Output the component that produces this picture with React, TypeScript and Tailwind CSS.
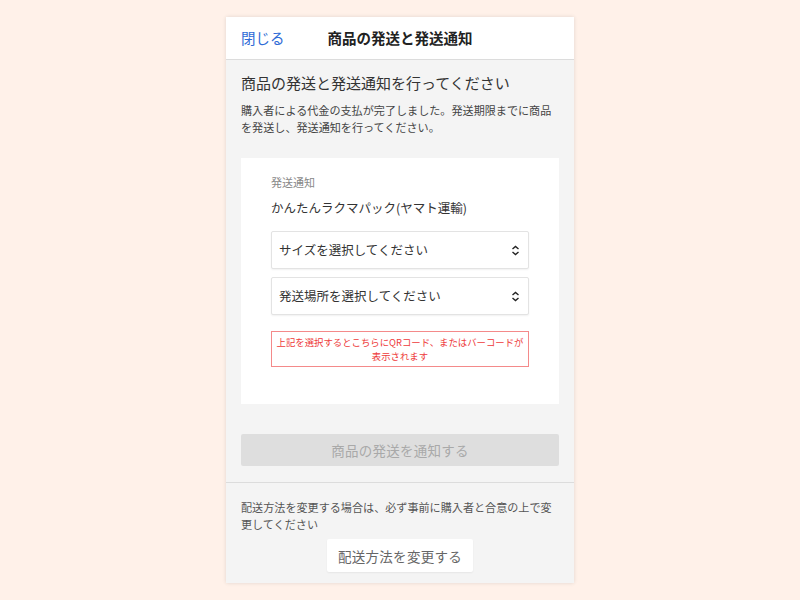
import React from "react";

const font = { fontFamily: '"Noto Sans CJK JP", "Noto Sans", sans-serif' };

function SelectBox({ label }: { label: string }) {
  return (
    <div className="flex h-[38px] items-center justify-between rounded-[2px] border border-[#e3e3e3] bg-white pl-[7px] pr-[8px] shadow-[0_1px_2px_rgba(0,0,0,0.06)]">
      <span className="text-[12.5px] text-[#333]">{label}</span>
      <svg width="9" height="11" viewBox="0 0 9 11" fill="none">
        <path d="M1.5 4L4.5 1.5L7.5 4" stroke="#222" strokeWidth="1.4" />
        <path d="M1.5 7L4.5 9.5L7.5 7" stroke="#222" strokeWidth="1.4" />
      </svg>
    </div>
  );
}

export default function App() {
  return (
    <div className="flex min-h-screen justify-center bg-[#fff1e9] pt-[17px]" style={font}>
      <div className="h-[566px] w-[348px] bg-[#f4f4f4] shadow-[0_0_4px_rgba(0,0,0,0.12)]">
        <div className="grid h-[43px] grid-cols-[1fr_auto_1fr] items-center border-b border-[#dcdcdc] bg-white px-[15px]">
          <button className="justify-self-start text-[14.5px] text-[#2f6bd6]">閉じる</button>
          <h1 className="text-[14.5px] font-bold text-[#222]">商品の発送と発送通知</h1>
          <div />
        </div>

        <div className="px-[15px] pt-[12px]">
          <h2 className="text-[15px] leading-[22px] text-[#333]">商品の発送と発送通知を行ってください</h2>
          <p className="mt-[8px] text-[11.1px] leading-[17px] text-[#444]">
            購入者による代金の支払が完了しました。発送期限までに商品を発送し、発送通知を行ってください。
          </p>

          <div className="mt-[22px] bg-white px-[30px] pb-[37px] pt-[16px]">
            <div className="text-[11px] text-[#888]">発送通知</div>
            <div className="mt-[8px] text-[12.5px] text-[#333]">かんたんラクマパック(ヤマト運輸)</div>
            <div className="mt-[14px] flex flex-col gap-[8px]">
              <SelectBox label="サイズを選択してください" />
              <SelectBox label="発送場所を選択してください" />
            </div>
            <div className="mt-[16px] whitespace-nowrap border border-[#f48a8a] px-[2px] py-[3px] text-center text-[9.4px] leading-[14px] text-[#ee3b3b]">
              上記を選択するとこちらにQRコード、またはバーコードが
              <br />
              表示されます
            </div>
          </div>

          <button
            disabled
            className="mt-[30px] h-[32px] w-full rounded-[2px] bg-[#dedede] text-[13.5px] tracking-[0.02em] text-[#a9a9a9]"
          >
            商品の発送を通知する
          </button>
        </div>

        <div className="mt-[16px] border-t border-[#dcdcdc] px-[15px] pt-[16px]">
          <p className="text-[11.1px] leading-[17px] text-[#555]">
            配送方法を変更する場合は、必ず事前に購入者と合意の上で変更してください
          </p>
          <div className="mt-[6px] flex justify-center">
            <button className="h-[33px] rounded-[2px] bg-white px-[11px] text-[13.5px] tracking-[0.02em] text-[#666] shadow-[0_1px_2px_rgba(0,0,0,0.06)]">
              配送方法を変更する
            </button>
          </div>
        </div>
      </div>
    </div>
  );
}
